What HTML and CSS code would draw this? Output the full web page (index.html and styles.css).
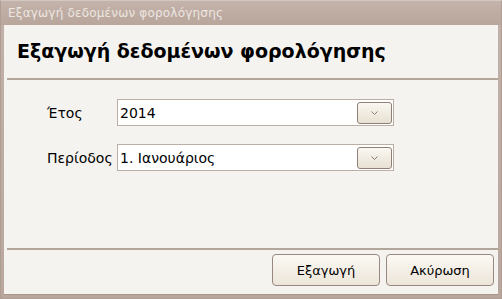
FILE: index.html
```html
<!DOCTYPE html>
<html>
<head>
<meta charset="utf-8">
<link rel="stylesheet" href="styles.css">
</head>
<body>
<div class="window">
  <div class="titlebar">Εξαγωγή δεδομένων φορολόγησης</div>
  <div class="client">
    <div class="header">Εξαγωγή δεδομένων φορολόγησης</div>
    <div class="sep"></div>
    <div class="form">
      <div class="row">
        <span class="label">Έτος</span>
        <div class="combo">
          <span class="value">2014</span>
          <span class="dd"><svg width="7" height="4" viewBox="0 0 7 4"><path d="M0.5 0.5 L3.5 3.5 L6.5 0.5" fill="none" stroke="#8a7c74" stroke-width="1"/></svg></span>
        </div>
      </div>
      <div class="row">
        <span class="label">Περίοδος</span>
        <div class="combo">
          <span class="value">1. Ιανουάριος</span>
          <span class="dd"><svg width="7" height="4" viewBox="0 0 7 4"><path d="M0.5 0.5 L3.5 3.5 L6.5 0.5" fill="none" stroke="#8a7c74" stroke-width="1"/></svg></span>
        </div>
      </div>
    </div>
    <div class="sep"></div>
    <div class="buttons">
      <button class="btn">Εξαγωγή</button>
      <button class="btn">Ακύρωση</button>
    </div>
  </div>
</div>
</body>
</html>
```

FILE: styles.css
```css
html, body {
  margin: 0;
  padding: 0;
  background: #c2b1a8;
}
.window {
  width: 502px;
  height: 299px;
  box-sizing: border-box;
  display: flex;
  flex-direction: column;
  background: linear-gradient(#c2b1a8, #b9a79e);
  border: 1px solid #b09d94;
  border-top-color: #d4c8c2;
  font-family: "DejaVu Sans", sans-serif;
}
.titlebar {
  height: 24px;
  box-sizing: border-box;
  padding: 5px 0 0 7px;
  font-size: 12px;
  letter-spacing: 0.2px;
  color: #ece6e1;
  background: linear-gradient(#c4b3aa, #b8a69d);
  white-space: nowrap;
}
.client {
  flex: 1;
  margin: 0 3px 3px 3px;
  background: #f5f3ef;
  display: flex;
  flex-direction: column;
  border-bottom: 1px solid #a8968c;
}
.header {
  height: 53px;
  box-sizing: border-box;
  padding: 15px 0 0 13px;
  font-size: 19px;
  font-weight: bold;
  color: #000;
  white-space: nowrap;
}
.sep {
  height: 2px;
  margin-left: 3px;
  background: #b3a69a;
}
.form {
  flex: 1;
  padding: 19px 0 0 43px;
  display: flex;
  flex-direction: column;
  gap: 18px;
}
.row {
  display: flex;
  align-items: center;
}
.label {
  width: 70px;
  font-size: 14px;
  color: #000;
}
.combo {
  width: 277px;
  height: 27px;
  box-sizing: border-box;
  border: 1px solid #bcaea3;
  background: #fff;
  display: flex;
  align-items: center;
  justify-content: space-between;
  padding: 0 1px 0 2px;
}
.value {
  font-size: 14px;
  color: #000;
}
.dd {
  width: 35px;
  height: 22px;
  box-sizing: border-box;
  border: 1px solid #8f7f77;
  border-radius: 3px;
  background: linear-gradient(#faf8f2, #e8e0d2);
  display: flex;
  align-items: center;
  justify-content: center;
}
.buttons {
  height: 44px;
  box-sizing: border-box;
  display: flex;
  justify-content: flex-end;
  gap: 6px;
  padding: 4px 4px 0 0;
}
.btn {
  width: 108px;
  height: 32px;
  border: 1px solid #998880;
  border-radius: 4px;
  background: linear-gradient(#fbf9f4, #ece5d9);
  font-family: "DejaVu Sans", sans-serif;
  font-size: 13px;
  color: #000;
  padding: 0;
}
```
